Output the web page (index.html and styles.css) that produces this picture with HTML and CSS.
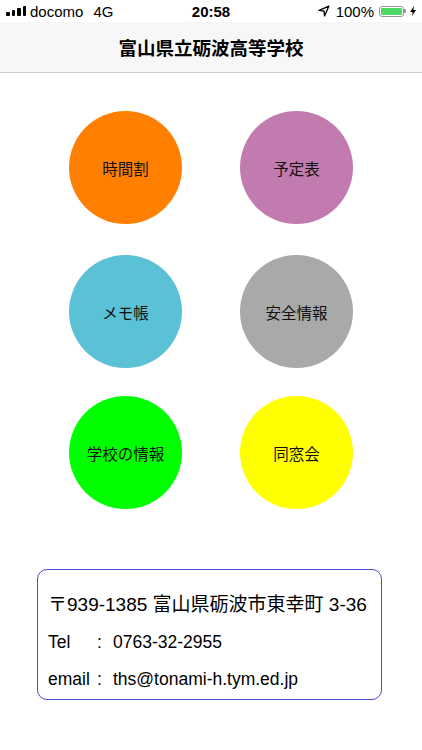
FILE: index.html
```html
<!DOCTYPE html>
<html lang="ja">
<head>
    <meta charset="UTF-8">
    <meta name="viewport" content="width=device-width, initial-scale=1.0">
    <title>富山県立砺波高等学校</title>
    <link rel="stylesheet" href="styles.css">
</head>
<body>
    <div class="status-bar">
        <div class="status-left">
            <span class="signal">
                <i style="height: 4px"></i><i style="height: 6px"></i><i style="height: 8px"></i><i style="height: 10px"></i>
            </span>
            <span>docomo</span>
            <span class="net">4G</span>
        </div>
        <div class="status-time">20:58</div>
        <div class="status-right">
            <svg class="arrow" width="12" height="12" viewBox="0 0 11 11">
                <path d="M10 1 L1 5 L5.5 5.5 L6 10 Z" fill="none" stroke="#000" stroke-width="1.2" stroke-linejoin="round"/>
            </svg>
            <span>100%</span>
            <span class="battery"><span class="battery-level"></span></span>
            <span class="battery-tip"></span>
            <svg class="bolt" width="6" height="10" viewBox="0 0 6 10">
                <path d="M4 0 L0 6 L2.6 6 L2 10 L6 4 L3.4 4 Z" fill="#000"/>
            </svg>
        </div>
    </div>

    <header class="nav-bar">
        <h1>富山県立砺波高等学校</h1>
    </header>

    <main class="menu">
        <div class="menu-row">
            <a class="menu-btn orange">時間割</a>
            <a class="menu-btn purple">予定表</a>
        </div>
        <div class="menu-row">
            <a class="menu-btn blue">メモ帳</a>
            <a class="menu-btn gray">安全情報</a>
        </div>
        <div class="menu-row">
            <a class="menu-btn green">学校の情報</a>
            <a class="menu-btn yellow">同窓会</a>
        </div>
    </main>

    <div class="contact">
        <p class="address">〒939-1385 富山県砺波市東幸町 3-36</p>
        <p><span class="label">Tel</span><span class="colon">:</span>0763-32-2955</p>
        <p><span class="label">email</span><span class="colon">:</span>ths@tonami-h.tym.ed.jp</p>
    </div>
</body>
</html>
```

FILE: styles.css
```css
body {
    margin: 0;
    padding: 0;
    background: #fff;
    color: #000;
    font-family: "Helvetica Neue", Arial, "Liberation Sans", "Noto Sans CJK JP", sans-serif;
}

.status-bar {
    height: 22px;
    display: flex;
    align-items: center;
    justify-content: space-between;
    padding: 0 6px;
    font-size: 15px;
    position: relative;
}

.status-left {
    display: flex;
    align-items: center;
    gap: 4px;
}

.signal {
    display: flex;
    align-items: flex-end;
    gap: 2px;
    height: 10px;
}

.signal i {
    display: block;
    width: 3.5px;
    background: #000;
    border-radius: 1px;
}

.net {
    margin-left: 6px;
}

.status-time {
    position: absolute;
    left: 0;
    right: 0;
    text-align: center;
    font-weight: 600;
    pointer-events: none;
}

.status-right {
    display: flex;
    align-items: center;
    gap: 4px;
}

.arrow {
    margin-right: 2px;
}

.battery {
    width: 25px;
    height: 11px;
    border: 1px solid #999;
    border-radius: 3px;
    padding: 1px;
    box-sizing: border-box;
    display: flex;
    margin-left: 1px;
}

.battery-level {
    flex: 1;
    background: #4cd964;
    border-radius: 1px;
}

.battery-tip {
    width: 2px;
    height: 4px;
    background: #999;
    margin-left: -4px;
    border-radius: 0 1px 1px 0;
}

.nav-bar {
    height: 50px;
    background: #f7f7f7;
    border-bottom: 1px solid #cfcfcf;
    display: flex;
    align-items: center;
    justify-content: center;
}

.nav-bar h1 {
    margin: 0;
    font-size: 18.5px;
    font-weight: bold;
    font-family: "Noto Sans CJK JP", sans-serif;
}

.menu {
    padding-top: 38px;
}

.menu-row {
    display: flex;
    justify-content: center;
    gap: 58px;
    margin-bottom: 31px;
}

.menu-row:nth-child(2) {
    margin-bottom: 28px;
}

.menu-row:last-child {
    margin-bottom: 0;
}

.menu-btn {
    width: 113px;
    height: 113px;
    border-radius: 50%;
    display: flex;
    align-items: center;
    justify-content: center;
    font-size: 15.5px;
    font-family: "Noto Sans CJK JP", sans-serif;
    color: #111;
}

.orange { background: #ff8000; }
.purple { background: #c27bae; }
.blue { background: #5bc1d6; }
.gray { background: #a9a9a9; }
.green { background: #00ff00; }
.yellow { background: #ffff00; }

.contact {
    margin: 60px 40px 0 37px;
    height: 131px;
    border: 1.5px solid #4a4ad4;
    border-radius: 10px;
    box-sizing: border-box;
    padding: 22px 0 0 10px;
}

.contact p {
    margin: 0;
    height: 37px;
    font-size: 17.5px;
    line-height: 26px;
    display: flex;
}

.contact p.address {
    font-size: 19px;
}

.contact .label {
    width: 49px;
}

.contact .colon {
    width: 16px;
}
```
